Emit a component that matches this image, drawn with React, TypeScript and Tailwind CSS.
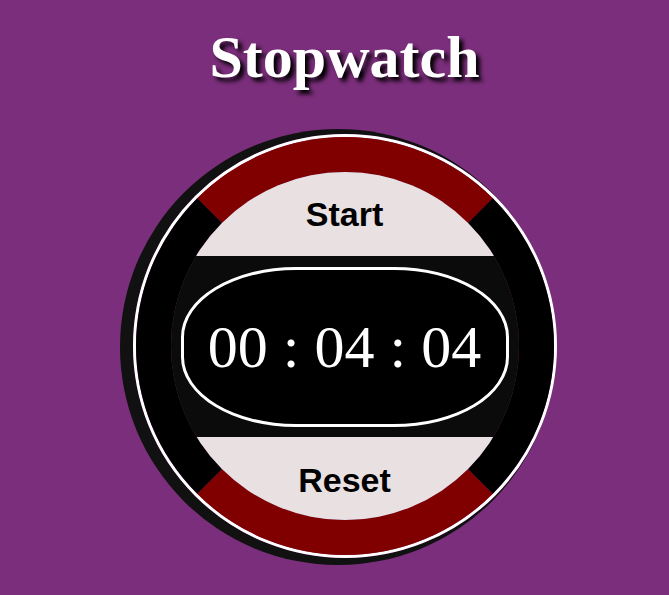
import React, { useEffect, useState } from 'react';

const pad = (n: number) => String(n).padStart(2, '0');

const App: React.FC = () => {
  // time in hundredths of a second, starts where the screenshot was taken
  const [time, setTime] = useState(404);
  const [running, setRunning] = useState(false);

  useEffect(() => {
    if (!running) return;
    const timer = setInterval(() => setTime((t) => t + 1), 10);
    return () => clearInterval(timer);
  }, [running]);

  const minutes = Math.floor(time / 6000);
  const seconds = Math.floor((time % 6000) / 100);
  const hundredths = time % 100;

  return (
    <div className="min-h-screen bg-[#7b2e7b] flex flex-col items-center pl-[20px]">
      {/* Title */}
      <h1 className="mt-[12px] text-[60px] leading-normal font-bold text-white font-['Liberation_Serif',serif] [text-shadow:4px_4px_4px_#000]">
        Stopwatch
      </h1>

      {/* Watch face */}
      <div className="mt-[32px] w-[424px] h-[424px] rounded-full border-[3px] border-white shadow-[-7px_1px_0_6px_#111]">
        <div className="w-full h-full rounded-full border-[35px] border-t-[#800000] border-b-[#800000] border-l-black border-r-black overflow-hidden flex flex-col">
          <button
            className="h-[84px] shrink-0 bg-[#e8e0e1] text-black text-[34px] font-bold font-['Liberation_Sans',Arial,sans-serif] flex items-center justify-center cursor-pointer"
            onClick={() => setRunning((r) => !r)}
          >
            {running ? 'Stop' : 'Start'}
          </button>

          <div className="h-[181px] shrink-0 bg-[#0b0b0b] flex items-center justify-center pt-[1px]">
            <div className="w-[328px] h-[160px] border-[3px] border-white rounded-[115px/70px] bg-black flex items-center justify-center text-white text-[60px] leading-normal font-['Liberation_Serif',serif]">
              {pad(minutes)} : {pad(seconds)} : {pad(hundredths)}
            </div>
          </div>

          <button
            className="flex-1 bg-[#e8e0e1] text-black text-[34px] font-bold font-['Liberation_Sans',Arial,sans-serif] flex items-center justify-center pt-[3px] cursor-pointer"
            onClick={() => {
              setRunning(false);
              setTime(0);
            }}
          >
            Reset
          </button>
        </div>
      </div>
    </div>
  );
};

export default App;
